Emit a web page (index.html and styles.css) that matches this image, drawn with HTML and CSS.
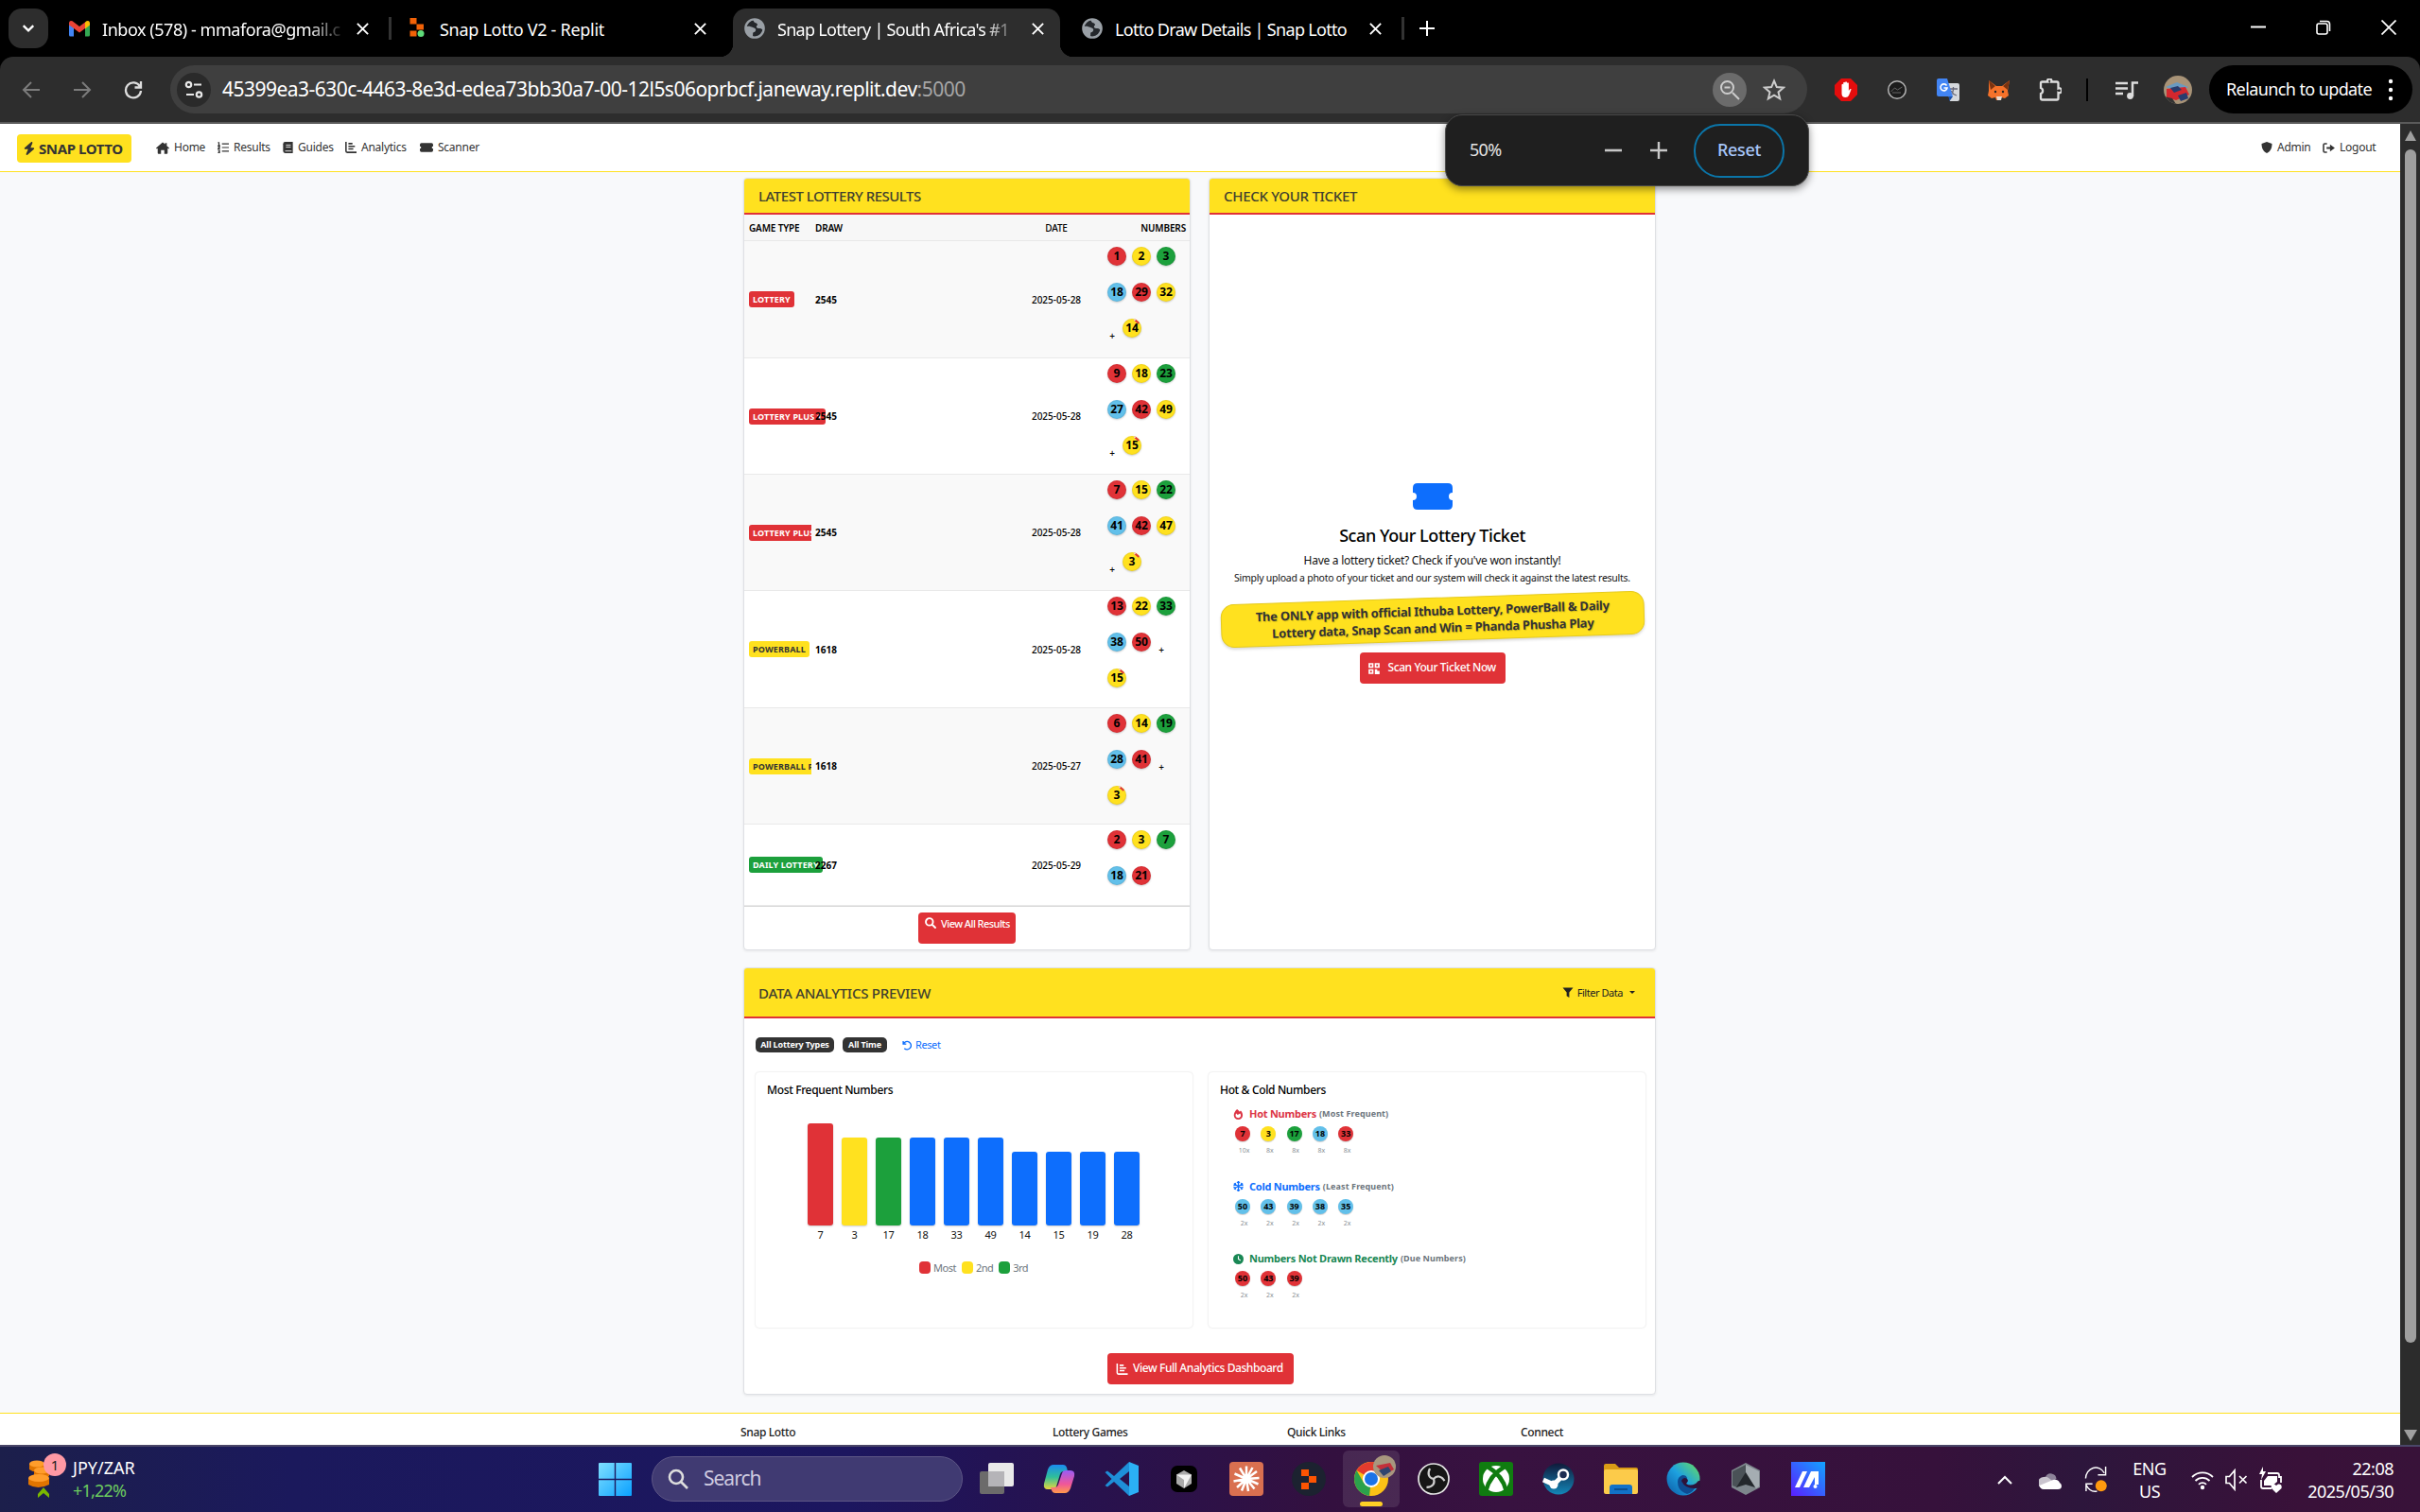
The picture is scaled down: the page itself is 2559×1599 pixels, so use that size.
FILE: index.html
```html
<!DOCTYPE html>
<html lang="en">
<head>
<meta charset="utf-8">
<title>Snap Lottery</title>
<link rel="stylesheet" href="styles.css">
</head>
<body>
<svg class="defs" aria-hidden="true">
  <symbol id="x" viewBox="0 0 16 16"><path d="M2 2l12 12M14 2L2 14" fill="none" stroke="currentColor" stroke-width="2"/></symbol>
  <symbol id="globe" viewBox="0 0 24 24"><circle cx="12" cy="12" r="10.500" fill="#24272b" stroke="#9aa0a6" stroke-width="2.600"/><path d="M2 10c4-1 5 0 8 1s4 2 3 4-3 1-3 3 0 3-1 4C4 21 1 15 2 10zM12 1c6 0 10 4 11 10v3c-2 0-3-2-5-2s-4 0-4-2 2-1 1-3-3-1-4-3 0-2 1-3z" fill="#9aa0a6"/></symbol>
  <symbol id="bolt" viewBox="0 0 448 512"><path fill="currentColor" d="M349 44c6-14 1-30-11-39s-30-8-41 2L41 231c-10 9-14 23-9 36s17 20 30 20H176L99 468c-6 14-1 30 11 39s30 8 41-2l256-219c10-9 14-23 9-36s-17-20-30-20H272z"/></symbol>
  <symbol id="home" viewBox="0 0 16 14"><path fill="currentColor" d="M8 0L0 7l1 1 1-.7V13q0 1 1 1h3V9.500h4V14h3q1 0 1-1V7.300l1 .7 1-1-3-2.700V1h-2v1.500z"/></symbol>
  <symbol id="list" viewBox="0 0 14 14"><path fill="none" stroke="currentColor" stroke-width="1.300" d="M5.500 2.500H14M5.500 7H14M5.500 11.500H14M.5 1h1.300v3.500M.3 4.500h3M.5 6h2v1.200l-2 1.500h2.500M.5 10.500h2v3h-2M1 12h1.500"/></symbol>
  <symbol id="book" viewBox="0 0 12 14"><path fill="currentColor" d="M2.500 0H12v14H2.500Q0 14 0 11.500v-9Q0 0 2.500 0z"/><path stroke="#fff" d="M3.500 4h6M3.500 6.500h6M2.500 11.300h8"/></symbol>
  <symbol id="chart" viewBox="0 0 14 14"><path fill="none" stroke="currentColor" stroke-width="1.800" d="M1 0v11.500Q1 13 2.500 13H14M4 2.200h5M4 5.500h8M4 8.800h6"/></symbol>
  <symbol id="ticket" viewBox="0 0 42 28"><path fill="currentColor" d="M5 0h32q5 0 5 5v5a4 4 0 0 0 0 8v5q0 5-5 5H5q-5 0-5-5v-5a4 4 0 0 0 0-8V5q0-5 5-5z"/></symbol>
  <symbol id="shield" viewBox="0 0 12 12"><path fill="currentColor" d="M6 0l5.500 2c0 5-2 8.500-5.500 10C2.500 10.500.5 7 .5 2z"/></symbol>
  <symbol id="logout" viewBox="0 0 14 12"><path fill="none" stroke="currentColor" stroke-width="1.700" d="M5 1H2.500Q1 1 1 2.500v7Q1 11 2.500 11H5"/><path fill="currentColor" d="M4.500 4.800H8.500V2L14 6l-5.500 4V7.200h-4z"/></symbol>
  <symbol id="search" viewBox="0 0 14 14"><path fill="none" stroke="currentColor" stroke-width="2.200" stroke-linecap="round" d="M9 9l3.800 3.800M10 5.700a4.400 4.400 0 1 1-8.800 0 4.400 4.400 0 0 1 8.800 0z"/></symbol>
  <symbol id="qr" viewBox="0 0 12 12"><path fill="none" stroke="currentColor" stroke-width="1.700" d="M1 1h3.500v3.500H1zM7.500 1H11v3.500H7.500zM1 7.500h3.500V11H1z"/><path fill="currentColor" d="M6.800 6.800h2.500v1.700h2.500V12H6.800z"/></symbol>
  <symbol id="filter" viewBox="0 0 12 12"><path fill="currentColor" d="M0 .5h12L7.500 6v6l-3-2V6z"/></symbol>
  <symbol id="undo" viewBox="0 0 12 12"><path fill="none" stroke="currentColor" stroke-width="1.500" d="M1.200 1v3.500h3.500M1.500 4.200A4.600 4.600 0 1 1 2.500 9.500"/></symbol>
  <symbol id="fire" viewBox="0 0 12 12"><path fill="currentColor" fill-rule="evenodd" d="M4.500 0C2 2.300.8 4.500.8 7A5.100 5 0 0 0 11 7c0-1.800-.9-3.800-2.300-5.300L7.500 3C6.700 2 5.600.9 4.500 0zM3.500 5l1.700 1.500L8 5c1.500 2 1 5-2 5S2 7.500 3.500 5z"/></symbol>
  <symbol id="snow" viewBox="0 0 12 12"><path fill="none" stroke="currentColor" stroke-width="1.300" d="M6 0v12M.8 3l10.400 6M11.200 3L.8 9M4.300 1L6 2.500 7.700 1M4.300 11L6 9.500 7.700 11M.5 5l2.300-.8L2.300 2M11.500 7l-2.300.8.5 2.200M11.500 5l-2.300-.8.5-2.200M.5 7l2.300.8-.5 2.200"/></symbol>
  <symbol id="clock" viewBox="0 0 12 12"><circle cx="6" cy="6" r="6" fill="currentColor"/><path fill="none" stroke="#fff" stroke-width="1.200" d="M6 2.500V6l2.500 1.700"/></symbol>
</svg>

<header class="tabstrip">
  <div class="tab-menu"><svg viewBox="0 0 12 12" width="14" height="14"><path d="M1.500 3.500L6 8l4.500-4.500" fill="none" stroke="#fff" stroke-width="2"/></svg></div>
  <div class="tab sep">
    <svg class="fav" viewBox="0 0 22 17"><path d="M0 2v13.500Q0 17 1.500 17H5V7z" fill="#4285f4"/><path d="M22 2v13.500q0 1.500-1.500 1.500H17V7z" fill="#34a853"/><path d="M17 2l1.500-1.200Q22-.5 22 3v2l-5 4z" fill="#fbbc04"/><path d="M0 5V3Q0-.5 3.500.8L11 6.500 17 2v6.500L11 13 5 8.500z" fill="#ea4335"/></svg>
    <span class="tab-title fade k1">Inbox (578) - mmafora@gmail.c</span><svg class="close"><use href="#x"/></svg>
  </div>
  <div class="tab">
    <svg class="fav" viewBox="0 0 22 22"><path d="M3.500 0h7v6.500h-7zM10.500 6.500H18v6h-7.500zM3.500 13.500h7v6h-7z" fill="#f26207"/><circle cx="15" cy="16.500" r="3.500" fill="#5fdc7a"/></svg>
    <span class="tab-title k2">Snap Lotto V2 - Replit</span><svg class="close"><use href="#x"/></svg>
  </div>
  <div class="tab active">
    <svg class="fav"><use href="#globe"/></svg>
    <span class="tab-title fade k3">Snap Lottery | South Africa's #1</span><svg class="close"><use href="#x"/></svg>
  </div>
  <div class="tab sep">
    <svg class="fav"><use href="#globe"/></svg>
    <span class="tab-title k4">Lotto Draw Details | Snap Lotto</span><svg class="close"><use href="#x"/></svg>
  </div>
  <svg class="newtab" viewBox="0 0 16 16"><path d="M8 0v16M0 8h16" stroke="#fff" stroke-width="2"/></svg>
  <div class="winctl">
    <svg viewBox="0 0 16 16"><path d="M0 7.500h16" stroke="#fff" stroke-width="2"/></svg>
    <svg viewBox="0 0 16 16"><rect x="1" y="4" width="11" height="11" rx="2" fill="none" stroke="#fff" stroke-width="1.600"/><path d="M4 1.500h7.500q3 0 3 3V12" fill="none" stroke="#fff" stroke-width="1.600"/></svg>
    <svg viewBox="0 0 16 16"><path d="M.5.5l15 15M15.500.5l-15 15" stroke="#fff" stroke-width="1.700"/></svg>
  </div>
</header>

<div class="toolbar">
  <svg class="nav-ic dim" viewBox="0 0 20 20"><path d="M19 10H2M10 2l-8 8 8 8" fill="none" stroke="currentColor" stroke-width="2"/></svg>
  <svg class="nav-ic dim" viewBox="0 0 20 20"><path d="M1 10h17M10 2l8 8-8 8" fill="none" stroke="currentColor" stroke-width="2"/></svg>
  <svg class="nav-ic" viewBox="0 0 20 20"><path d="M17 6.500A8 8 0 1 0 18 11M18 1v6.500h-6.500" fill="none" stroke="currentColor" stroke-width="2.300"/></svg>
  <div class="omnibox">
    <div class="circle site"><svg viewBox="0 0 20 20" width="20" height="20"><g fill="none" stroke="#e8e8e8" stroke-width="2.200"><circle cx="4.500" cy="4.500" r="2.700"/><path d="M10 4.500h8M2 15h8"/><circle cx="15.500" cy="15" r="2.700"/></g></svg></div>
    <span class="url">45399ea3-630c-4463-8e3d-edea73bb30a7-00-12l5s06oprbcf.janeway.replit.dev<i>:5000</i></span>
    <div class="circle zoomed"><svg viewBox="0 0 22 22" width="22" height="22"><path d="M14 14l7 7M15 8.500a6.500 6.500 0 1 1-13 0 6.500 6.500 0 0 1 13 0zM5.500 8.500h6" fill="none" stroke="#ccc" stroke-width="2"/></svg></div>
    <svg class="star" viewBox="0 0 24 24"><path d="M12 2.500l2.800 6.600 7.200.6-5.500 4.700 1.700 7L12 17.700l-6.200 3.700 1.700-7L2 9.700l7.200-.6z" fill="none" stroke="#ccc" stroke-width="2"/></svg>
  </div>
  <div class="exts">
    <svg viewBox="0 0 24 24"><path d="M7 0h10l7 7v10l-7 7H7l-7-7V7z" fill="#e40d0d"/><path d="M7.500 13V6.500q1-1.500 1.700 0V10V4.500q1-1.500 1.900 0V10 4q1-1.500 1.900 0v6V5q1-1.500 1.900 0v8l1.500-2q1.500-.5 1 1L15 18q-1 2-3.500 2-4 0-4-4z" fill="#fff"/></svg>
    <svg viewBox="0 0 24 24"><circle cx="12" cy="12" r="9.300" fill="#1c1c1c" stroke="#b5b5b5" stroke-width="1.500"/><path d="M5.500 14l4-4 3 2 5-3M7 15h9" stroke="#666" fill="none"/></svg>
    <svg viewBox="0 0 24 24"><path d="M9 5h13q2 0 2 2v15q0 2-2 2h-8z" fill="#d5d8dc"/><path d="M13 11h9M17.500 9v2c0 4-2 6-4 7M15 13c1 2 3 4 6 5" stroke="#667" fill="none" stroke-width="1.300"/><path d="M2 0h9l6 19H2q-2 0-2-2V2q0-2 2-2z" fill="#4285f4"/><path d="M12.500 19H17l-3.500 5z" fill="#1a4fa8"/><path d="M10.500 7.500A3.500 3.500 0 1 0 11 10H7.500" stroke="#fff" stroke-width="1.600" fill="none"/></svg>
    <svg viewBox="0 0 24 24"><path d="M1 2l8 6h6l8-6-2 11 1 5-4 3-4-1-1 3h-4l-1-3-4 1-4-3 1-5z" fill="#f5722a"/><path d="M1 2l7 6-5 4zM23 2l-7 6 5 4z" fill="#7a3310"/><path d="M9 19h6l-1 4h-4z" fill="#e8dcd2"/><circle cx="8" cy="14" r="1.200" fill="#222"/><circle cx="16" cy="14" r="1.200" fill="#222"/></svg>
    <svg viewBox="0 0 24 24"><path d="M2 5q0-1.500 1.500-1.500h5.700a2.200 2.200 0 1 1 4 0H19q1.500 0 1.500 1.500v5.500a2.500 2.500 0 1 1 0 4.500v6q0 1.500-1.500 1.500H3.500Q2 22.500 2 21v-5a3.200 3.200 0 0 0 0-6z" fill="none" stroke="#ddd" stroke-width="2.300"/></svg>
  </div>
  <span class="tb-sep"></span>
  <svg class="music" viewBox="0 0 24 20"><path d="M0 3h13M0 8.500h13M0 14h8M18 17V2.500h6" fill="none" stroke="#ddd" stroke-width="2.500"/><circle cx="15.500" cy="16.500" r="3.400" fill="#ddd"/></svg>
  <svg class="avatar" viewBox="0 0 30 30"><clipPath id="av"><circle cx="15" cy="15" r="15"/></clipPath><g clip-path="url(#av)"><path fill="#a89377" d="M0 0h30v30H0z"/><path fill="#6a9ac0" d="M2 12l12-5 12 5-8 5z"/><path fill="#d4272e" d="M3 14l20-2 4 8-14 6-10-3z"/><path fill="#283c6e" d="M7 13l8-2 4 4-8 3zM15 21l9-3 2 6-8 3z"/><path fill="#333" d="M0 22l9 2 4 6H0z"/></g></svg>
  <div class="relaunch"><span>Relaunch to update</span><svg viewBox="0 0 6 24" width="6" height="24"><circle cx="3" cy="3" r="2.200" fill="#fff"/><circle cx="3" cy="12" r="2.200" fill="#fff"/><circle cx="3" cy="21" r="2.200" fill="#fff"/></svg></div>
</div>

<div class="zoom-pop"><span class="pct">50%</span>
  <svg viewBox="0 0 18 18"><path d="M0 9h18" stroke="#c7c7c7" stroke-width="2.600"/></svg>
  <svg viewBox="0 0 18 18"><path d="M0 9h18M9 0v18" stroke="#c7c7c7" stroke-width="2.400"/></svg>
  <span class="zreset">Reset</span></div>

<div class="viewport">
<div class="page">
  <nav class="nav">
    <div class="brand"><svg width="12" height="14"><use href="#bolt"/></svg><span>SNAP LOTTO</span></div>
    <a class="n1"><svg width="14" height="13"><use href="#home"/></svg><span>Home</span></a>
    <a class="n2"><svg width="12" height="12"><use href="#list"/></svg><span>Results</span></a>
    <a class="n3"><svg width="11" height="12"><use href="#book"/></svg><span>Guides</span></a>
    <a class="n4"><svg width="12" height="12"><use href="#chart"/></svg><span>Analytics</span></a>
    <a class="n5"><svg width="14" height="10"><use href="#ticket"/></svg><span>Scanner</span></a>
    <a class="n6"><svg width="12" height="12"><use href="#shield"/></svg><span>Admin</span></a>
    <a class="n7"><svg width="13" height="11"><use href="#logout"/></svg><span>Logout</span></a>
  </nav>

  <main class="main">
    <div class="top">
      <section class="card results">
        <h2>LATEST LOTTERY RESULTS</h2>
        <div class="tr th"><span>GAME TYPE</span><span>DRAW</span><span class="date">DATE</span><span class="right">NUMBERS</span></div>
        <div class="tr odd r1"><div class="type"><b class="badge red">LOTTERY</b></div><b class="draw">2545</b><span class="date">2025-05-28</span><div class="nums"><b class="r">1</b><b class="y">2</b><b class="g">3</b><b class="b">18</b><b class="r">29</b><b class="y">32</b><i>+</i><b class="y bonus">14</b></div></div>
        <div class="tr"><div class="type"><b class="badge red">LOTTERY PLUS 1</b></div><b class="draw">2545</b><span class="date">2025-05-28</span><div class="nums"><b class="r">9</b><b class="y">18</b><b class="g">23</b><b class="b">27</b><b class="r">42</b><b class="y">49</b><i>+</i><b class="y bonus">15</b></div></div>
        <div class="tr odd"><div class="type clip"><b class="badge red">LOTTERY PLUS 2</b></div><b class="draw">2545</b><span class="date">2025-05-28</span><div class="nums"><b class="r">7</b><b class="y">15</b><b class="g">22</b><b class="b">41</b><b class="r">42</b><b class="y">47</b><i>+</i><b class="y bonus">3</b></div></div>
        <div class="tr r1"><div class="type"><b class="badge yellow">POWERBALL</b></div><b class="draw">1618</b><span class="date">2025-05-28</span><div class="nums"><b class="r">13</b><b class="y">22</b><b class="g">33</b><b class="b">38</b><b class="r">50</b><i>+</i><b class="y bonus">15</b></div></div>
        <div class="tr odd"><div class="type clip"><b class="badge yellow">POWERBALL PLUS</b></div><b class="draw">1618</b><span class="date">2025-05-27</span><div class="nums"><b class="r">6</b><b class="y">14</b><b class="g">19</b><b class="b">28</b><b class="r">41</b><i>+</i><b class="y bonus">3</b></div></div>
        <div class="tr last"><div class="type"><b class="badge green">DAILY LOTTERY</b></div><b class="draw">2267</b><span class="date">2025-05-29</span><div class="nums"><b class="r">2</b><b class="y">3</b><b class="g">7</b><b class="b">18</b><b class="r">21</b></div></div>
        <div class="card-foot"><a class="btn all"><svg width="12" height="12"><use href="#search"/></svg><span>View All Results</span></a></div>
      </section>

      <section class="card scan">
        <h2>CHECK YOUR TICKET</h2>
        <div class="scan-body">
          <svg class="bigticket"><use href="#ticket"/></svg>
          <h3>Scan Your Lottery Ticket</h3>
          <p class="p1">Have a lottery ticket? Check if you've won instantly!</p>
          <p class="p2">Simply upload a photo of your ticket and our system will check it against the latest results.</p>
          <div class="ribbon"><span>The ONLY app with official Ithuba Lottery, PowerBall &amp; Daily</span><span>Lottery data, Snap Scan and Win = Phanda Phusha Play</span></div>
          <a class="btn now"><svg width="12" height="12"><use href="#qr"/></svg><span>Scan Your Ticket Now</span></a>
        </div>
      </section>
    </div>

    <section class="card analytics">
      <h2><span>DATA ANALYTICS PREVIEW</span><span class="filter"><svg width="12" height="11"><use href="#filter"/></svg><em>Filter Data</em><i class="caret"></i></span></h2>
      <div class="chips"><b>All Lottery Types</b><b>All Time</b><a><svg width="11" height="11"><use href="#undo"/></svg><span>Reset</span></a></div>
      <div class="panels">
        <div class="panel freq">
          <h4>Most Frequent Numbers</h4>
          <div class="bars">
            <div><i class="r" style="height:108px"></i><span>7</span></div><div><i class="y" style="height:93px"></i><span>3</span></div><div><i class="g" style="height:93px"></i><span>17</span></div><div><i style="height:93px"></i><span>18</span></div><div><i style="height:93px"></i><span>33</span></div><div><i style="height:93px"></i><span>49</span></div><div><i style="height:78px"></i><span>14</span></div><div><i style="height:78px"></i><span>15</span></div><div><i style="height:78px"></i><span>19</span></div><div><i style="height:78px"></i><span>28</span></div>
          </div>
          <div class="legend"><i class="r"></i><span>Most</span><i class="y"></i><span>2nd</span><i class="g"></i><span>3rd</span></div>
        </div>
        <div class="panel hot">
          <h4>Hot &amp; Cold Numbers</h4>
          <div class="grp"><h5 class="c-hot"><svg width="11" height="11"><use href="#fire"/></svg><span>Hot Numbers</span><small>(Most Frequent)</small></h5>
            <div class="minis"><div><b class="r">7</b><span>10x</span></div><div><b class="y">3</b><span>8x</span></div><div><b class="g">17</b><span>8x</span></div><div><b class="b">18</b><span>8x</span></div><div><b class="r">33</b><span>8x</span></div></div></div>
          <div class="grp"><h5 class="c-cold"><svg width="11" height="11"><use href="#snow"/></svg><span>Cold Numbers</span><small>(Least Frequent)</small></h5>
            <div class="minis"><div><b class="b">50</b><span>2x</span></div><div><b class="b">43</b><span>2x</span></div><div><b class="b">39</b><span>2x</span></div><div><b class="b">38</b><span>2x</span></div><div><b class="b">35</b><span>2x</span></div></div></div>
          <div class="grp"><h5 class="c-due"><svg width="11" height="11"><use href="#clock"/></svg><span>Numbers Not Drawn Recently</span><small>(Due Numbers)</small></h5>
            <div class="minis"><div><b class="r">50</b><span>2x</span></div><div><b class="r">43</b><span>2x</span></div><div><b class="r">39</b><span>2x</span></div></div></div>
        </div>
      </div>
      <a class="btn dash"><svg width="13" height="12"><use href="#chart"/></svg><span>View Full Analytics Dashboard</span></a>
    </section>
  </main>

  <footer class="footer"><span>Snap Lotto</span><span>Lottery Games</span><span>Quick Links</span><span>Connect</span></footer>
</div>
<div class="scrollbar"><i class="up"></i><i class="thumb"></i><i class="down"></i></div>
</div>

<div class="taskbar">
  <div class="widget">
    <svg viewBox="0 0 34 52" width="34" height="52"><g fill="#e07400"><path d="M1 14v6q7 5 16 0v-6zM6 21v6q7 5 16 0v-6zM0 29v7q10 6 22 0v-7z"/></g><g fill="#ff9d2b"><ellipse cx="9" cy="14" rx="8" ry="3.500"/><ellipse cx="14" cy="21" rx="8" ry="3.500"/><ellipse cx="11" cy="29" rx="11" ry="4"/></g><path d="M10 50l0-4 6-7 6 7v4l-6-5z" fill="#7ab800"/></svg>
    <b class="notif">1</b>
    <div class="w-text"><span>JPY/ZAR</span><em>+1,22%</em></div>
  </div>
  <svg class="win" viewBox="0 0 35 35"><linearGradient id="wg" x1="0" y1="0" x2="1" y2="1"><stop offset="0" stop-color="#7fe0ff"/><stop offset="1" stop-color="#0aa0ff"/></linearGradient><path fill="url(#wg)" d="M0 1q0-1 1-1h15.800v16.800H0zM18.200 0H34q1 0 1 1v15.800H18.200zM0 18.200h16.800V35H1q-1 0-1-1zM18.200 18.200H35V34q0 1-1 1H18.200z"/></svg>
  <div class="search"><svg viewBox="0 0 22 22" width="22" height="22"><path d="M14 14l7 7M16 9A7 7 0 1 1 2 9a7 7 0 0 1 14 0z" fill="none" stroke="#ddd" stroke-width="2.600"/></svg><span>Search</span></div>
  <div class="apps">
    <svg viewBox="0 0 36 36"><rect x="0" y="10" width="26" height="24" rx="2" fill="#6c6b6b"/><rect x="9" y="1" width="27" height="25" rx="2" fill="#e9e9e9"/><path d="M9 10h17v16H9z" fill="#b5b4b8"/></svg>
    <svg viewBox="0 0 36 36"><linearGradient id="c1" x1="0" y1="0" x2="0" y2="1"><stop offset="0" stop-color="#1a8cf0"/><stop offset=".5" stop-color="#2fbf9a"/><stop offset="1" stop-color="#e9d63c"/></linearGradient><linearGradient id="c2" x1="0" y1="0" x2="0" y2="1"><stop offset="0" stop-color="#9a5cf5"/><stop offset=".6" stop-color="#f0569a"/><stop offset="1" stop-color="#ff9a4a"/></linearGradient><path d="M12 3h10q3 0 4 3l1 4h-4q-3 0-4 3l-4 13q-1 3-4 3H6q-5 0-4-6L6 8q2-5 6-5z" fill="url(#c1)"/><path d="M24 33H14q-3 0-4-3l-1-3h4q3 0 4-3l4-12q1-3 4-3h5q5 0 4 6l-4 13q-2 5-6 5z" fill="url(#c2)"/></svg>
    <svg viewBox="0 0 36 36"><path d="M26 0L10 15 3 9.500.5 11l7 7-7 7L3 26.500 10 21l16 15V26l-10-8 10-8z" fill="#1e8fd8"/><path d="M26 0l10 4v28l-10 4z" fill="#2bb0f5"/></svg>
    <svg viewBox="0 0 36 36"><rect x="4" y="4" width="28" height="28" rx="7" fill="#000"/><path d="M18 9l8 4.500v9.500l-8 5-8-5v-9.500z" fill="#aaa"/><path d="M10 13.500h16L18 28v-9z" fill="#f2f2f2"/></svg>
    <svg viewBox="0 0 36 36"><rect width="36" height="36" rx="4" fill="#d97050"/><path d="M18 18V4.500M18 18l6.500-12M18 18l11-8M18 18l13.500-1M18 18l12.500 5.500M18 18l8.500 10.500M18 18l2 13M18 18l-5 12.500M18 18L8 27M18 18L4.500 20.500M18 18L5.500 12.500M18 18L11 6.500" stroke="#fff" stroke-width="2.500"/></svg>
    <svg viewBox="0 0 36 36"><circle cx="18" cy="18" r="18" fill="#1c2230"/><path d="M10 8h8v7h8v7h-8v7h-8v-7h8v-7h-8z" fill="#fd5402"/></svg>
    <div class="app-on"><svg viewBox="0 0 36 36"><circle cx="18" cy="18" r="18" fill="#fbc116"/><path d="M18 18L2.500 9A18 18 0 0 1 33.600 9z" fill="#e33b2e"/><path d="M18 18l-2 18A18 18 0 0 1 2.500 9L10 22l8 4z" fill="#2ba24c"/><circle cx="18" cy="18" r="9" fill="#fff"/><circle cx="18" cy="18" r="7" fill="#1a73e8"/></svg><svg class="mini-av" viewBox="0 0 24 24"><circle cx="12" cy="12" r="12" fill="#a8977e"/><path fill="#c3303a" d="M3 11l15-3 4 7-9 5z"/><path fill="#30456f" d="M6 16l10-4 3 5-8 5z"/></svg></div>
    <svg viewBox="0 0 36 36"><circle cx="18" cy="18" r="16" fill="#161616" stroke="#e6e6e6" stroke-width="1.700"/><g fill="none" stroke="#cfcfcf" stroke-width="2.200"><path id="ob" d="M18 18c-5-1-7-5-4-11"/><use href="#ob" transform="rotate(120 18 18)"/><use href="#ob" transform="rotate(240 18 18)"/></g></svg>
    <svg viewBox="0 0 36 36"><rect width="36" height="36" rx="3" fill="#107c10"/><circle cx="18" cy="18" r="14" fill="#fff"/><path d="M9 5C19 11 26 20 28.500 30M27 5C17 11 10 20 7.500 30" fill="none" stroke="#107c10" stroke-width="4.500"/></svg>
    <svg viewBox="0 0 36 36"><linearGradient id="st" x1="0" y1="0" x2="0" y2="1"><stop offset="0" stop-color="#101a3a"/><stop offset="1" stop-color="#1387b8"/></linearGradient><circle cx="18" cy="18" r="16.500" fill="url(#st)"/><path d="M2 19l11 5 7-7" stroke="#fff" stroke-width="5" fill="none"/><circle cx="23" cy="13.500" r="5" fill="#1c2d52" stroke="#fff" stroke-width="2.500"/><circle cx="13" cy="24" r="4.500" fill="#fff"/></svg>
    <svg viewBox="0 0 36 36"><path d="M0 4q0-2 2-2h10l4 4h18q2 0 2 2v6H0z" fill="#d99b16"/><rect y="8" width="36" height="26" rx="2" fill="#fccb4a"/><path d="M6 34V27q0-3 3-3h18q3 0 3 3v7z" fill="#1272c8"/><path d="M11 29h14" stroke="#0b4f91" stroke-width="2"/></svg>
    <svg viewBox="0 0 36 36"><linearGradient id="ed" x1="0" y1="1" x2="1" y2="0"><stop offset="0" stop-color="#0c59a4"/><stop offset=".5" stop-color="#1da1e0"/><stop offset="1" stop-color="#6be05a"/></linearGradient><circle cx="18" cy="18" r="17.500" fill="url(#ed)"/><path d="M12 21q0-5 5-7 6 0 5 6-1 3-2 3 2 3 8 2 3-1 4 0-3 7-10 9-10-3-10-13z" fill="#0e4c92"/><path d="M16 20q1-3 4-3 3 1 3 3-1 2-2 3 4 3 10 0l3-3h2v7l-4 1q-12 1-16-8z" fill="#2e1239"/></svg>
    <svg viewBox="0 0 36 36"><path d="M18 1l15 8v18l-15 8-15-8V9z" fill="#7d868c"/><path d="M18 3v12L9 27l-5-2V10z" fill="#4a5257"/><path d="M18 3v10l11 15 3-2V10z" fill="#a5adb2"/><path d="M18 11l10 16-10-3-10 3z" fill="#23282c"/></svg>
    <svg viewBox="0 0 36 36"><linearGradient id="ma" x1="0" y1="1" x2="1" y2="0"><stop offset="0" stop-color="#5a1eff"/><stop offset="1" stop-color="#12a4ff"/></linearGradient><path fill="url(#ma)" d="M0 0h36v36H0z"/><path d="M4 27L12 10h5L9 27zM13 27l8-17h8v14h-4V16l-6 11z" fill="#fff"/><circle cx="25.500" cy="26" r="2" fill="#fff"/></svg>
  </div>
  <div class="tray">
    <svg class="t1" viewBox="0 0 16 10"><path d="M1 9l7-7 7 7" fill="none" stroke="#fff" stroke-width="2"/></svg>
    <svg class="t2" viewBox="0 0 24 20"><path d="M7 7a6 6 0 0 1 11.500 2L10 13z" fill="#8d8399"/><path d="M5 19a6 6 0 0 1 0-12 6 6 0 0 1 6 1.500l10 8z" fill="#c9c4ce"/><path d="M5 20q-3.500 0-4.500-4L15 10q5-1 7 3 2 1 2 3.500 0 3.500-4 3.500z" fill="#fff"/></svg>
    <svg class="t3" viewBox="0 0 26 30"><path d="M1.500 14A11 12 0 0 1 22 8M23.500 1v9h-8.500M2 28v-8h7M2 21c3 6 7 8 12 7" fill="none" stroke="#fff" stroke-width="1.500"/><circle cx="18.500" cy="22" r="6.200" fill="#ff9a0e"/></svg>
    <div class="lang"><span>ENG</span><span>US</span></div>
    <svg class="t4" viewBox="0 0 24 22"><g fill="none" stroke="#fff" stroke-width="1.800"><path d="M1 8a15.500 15.500 0 0 1 22 0M4.500 12a10.500 10.500 0 0 1 15 0M8 15.800a5.700 5.700 0 0 1 8 0"/></g><circle cx="12" cy="19" r="2.200" fill="#fff"/></svg>
    <svg class="t5" viewBox="0 0 24 24"><path d="M1 8.500h3.500L10 2v20l-5.500-6.500H1zM15 8l7.500 7.500M22.500 8L15 15.500" fill="none" stroke="#fff" stroke-width="1.700"/></svg>
    <svg class="t6" viewBox="0 0 24 28"><path d="M9 7h10q2 0 2 2v2h2v6M13 23H4q-2 0-2-2v-7" fill="none" stroke="#fff" stroke-width="1.800"/><path d="M9 10h10v6l-5 4H5v-5z" fill="#fff"/><path d="M4 0L0 8h3l-1 6 5-9H4zM18 28l-5-5q-1.500-5 3-4.500l2 1.500 2-1.500q4.500-.5 3.500 4.500z" fill="#fff"/></svg>
    <div class="clock"><span>22:08</span><span>2025/05/30</span></div>
  </div>
</div>
</body>
</html>
```
FILE: styles.css
```css
*{box-sizing:border-box;margin:0;padding:0}
html,body{width:2559px;height:1599px;overflow:hidden}
body{font-family:"Noto Sans","Open Sans",sans-serif;background:#000;color:#212529;font-size:12px;line-height:1.2;display:flex;flex-direction:column;position:relative}
svg{display:block;flex:none}
i,em{font-style:normal}
span,b{white-space:nowrap}
.defs{position:absolute;width:0;height:0}
.r{background:#e03237}.y{background:#ffe11f}.g{background:#1ca03c}.b{background:#62c0ea}

/* browser chrome */
.tabstrip{height:60px;background:#000;display:flex;padding-left:9px;flex:none}
.tab-menu{width:42px;height:42px;margin:9px 7px 0 0;border-radius:14px;background:#2d2d2d;display:flex;align-items:center;justify-content:center}
.tab{width:357px;height:60px;display:flex;align-items:center;padding-left:15px;position:relative;color:#fff;font-size:18px}
.tab>*{position:relative}
.fav{width:22px;height:22px}
.tab-title{width:253px;margin:4px 0 0 13px}
.k1{letter-spacing:-.45px}.k2{letter-spacing:-.28px}.k3{letter-spacing:-.71px}.k4{letter-spacing:-.68px}
.fade{-webkit-mask-image:linear-gradient(90deg,#000 86%,transparent 102%)}
.close{width:15px;height:15px;margin-left:15px}
.sep::after{content:"";position:absolute;right:1px;top:18px;width:3px;height:24px;background:#333}
.active::before{content:"";position:absolute;left:3px;right:8px;top:9px;bottom:0;background:#2d2d2d;border-radius:14px 14px 0 0}
.active::after{content:"";position:absolute;left:-11px;right:-6px;bottom:0;height:14px;background:radial-gradient(circle at 0 0,transparent 14px,#2d2d2d 14.500px) 0 0/14px 14px no-repeat,radial-gradient(circle at 100% 0,transparent 14px,#2d2d2d 14.500px) 100% 0/14px 14px no-repeat}
.newtab{width:16px;height:16px;margin:22px 0 0 15px}
.winctl{margin-left:auto;display:flex;gap:53px;padding:21px 25px 0 0}
.winctl svg{width:16px;height:16px}
.toolbar{height:71px;flex:none;background:#2d2d2d;border-bottom:2px solid #5a5a5a;border-radius:14px 14px 0 0;display:flex;align-items:center;padding:0 8px 0 23px}
.nav-ic{width:20px;height:20px;margin-right:34px;color:#ddd}
.nav-ic.dim{color:#7c7c7c}
.omnibox{width:1731px;height:51px;border-radius:26px;background:#3f3f3f;margin-left:-5px;display:flex;align-items:center;padding-left:7px;flex:none}
.circle{width:36px;height:36px;border-radius:50%;display:flex;align-items:center;justify-content:center;flex:none}
.site{background:#2a2a2a}
.zoomed{background:#6b6b6b}
.url{color:#fff;font-size:21px;margin-left:12px;width:1576px;letter-spacing:-.52px}
.url i{color:#a6a6a6}
.star{width:24px;height:24px;margin-left:17px}
.exts{display:flex;gap:30px;margin-left:29px}
.exts svg{width:24px;height:24px}
.tb-sep{width:2px;height:24px;background:#000;margin-left:26px}
.music{width:24px;height:20px;margin-left:29px}
.avatar{width:30px;height:30px;margin-left:27px}
.relaunch{margin-left:18px;width:215px;height:51px;border-radius:26px;background:#000;color:#fff;font-size:18px;display:flex;align-items:center;padding-left:18px;letter-spacing:-.6px}
.relaunch span{width:171px}
.zoom-pop{position:absolute;left:1528px;top:121px;width:385px;height:76px;border-radius:18px;background:#1f1f1f;border:1px solid #4a4a4a;box-shadow:0 3px 8px rgba(0,0,0,.45);z-index:5;display:flex;align-items:center;padding-left:25px;color:#e3e3e3;font-size:18px}
.pct{width:143px;letter-spacing:-.7px}
.zoom-pop svg{width:18px;height:18px;margin-right:30px}
.zreset{width:96px;height:57px;margin-left:-2px;border:2px solid #0b75a8;border-radius:28px;color:#a8c7fa;font-weight:500;letter-spacing:-.3px;display:flex;align-items:center;justify-content:center}

/* page */
.viewport{height:1397px;flex:none;display:flex}
.page{width:2538px;background:#f8f9fb;display:flex;flex-direction:column}
.scrollbar{width:21px;background:#2c2c2c;display:flex;flex-direction:column;align-items:center}
.up{margin-top:7px;border:6px solid transparent;border-top:0;border-bottom:11px solid #9f9f9f}
.thumb{width:12px;height:1262px;margin-top:9px;border-radius:6px;background:#9f9f9f}
.down{margin-top:auto;margin-bottom:4px;border:7px solid transparent;border-bottom:0;border-top:12px solid #9f9f9f}
.nav{height:51px;flex:none;background:#fff;border-bottom:1px solid #ffe11f;display:flex;align-items:center;padding:1px 0 0 18px;color:#333;letter-spacing:-.25px}
.brand{width:121px;height:30px;background:#ffe11f;border-radius:4px;display:flex;align-items:center;gap:4px;padding-left:7px;font-size:15px;font-weight:700;margin-right:26px;letter-spacing:-.4px}
.nav a{display:flex;align-items:center;gap:5px}
.n1{width:65px}.n2{width:69px}.n3{width:66px}.n4{width:79px}.n6{margin-left:auto;width:65px}.n7{width:82px}
.main{width:965px;margin-left:786px;padding-top:6px;flex:none}
.top{display:flex;gap:19px}
.card{background:#fff;border:1px solid #dee0e4;border-radius:4px;box-shadow:0 1px 3px rgba(0,0,0,.08)}
.card h2{background:#ffe11f;color:#40402f;border-bottom:2px solid #e03237;height:38px;border-radius:3px 3px 0 0;font-size:15px;font-weight:500;letter-spacing:-.48px;padding-left:15px;display:flex;align-items:center}
.results,.scan{width:473px;height:817px}
.scan h2{letter-spacing:-.3px}
.tr{height:123px;display:grid;grid-template-columns:70px 226px 58px 22px 1fr;align-items:center;padding-left:5px;border-bottom:1px solid #e9e9e9;color:#000;font-size:10px}
.tr.r1{height:124px}
.tr.last{height:86px}
.odd{background:#f9f9f9}
.th{height:28px;background:#f7f7f7;font-weight:600;grid-template-columns:70px 226px 58px 1fr;letter-spacing:-.15px}
.right{text-align:right;padding-right:4px}
.date{text-align:center;font-weight:500}
.type{width:66px}
.clip{overflow:hidden}
.badge{display:inline-block;height:17px;line-height:17px;padding:0 4px;border-radius:3px;font-size:9px;letter-spacing:.15px;color:#fff}
.badge.red{background:#e03237}.badge.green{background:#1ca03c}.badge.yellow{background:#ffe11f;color:#333}
.draw{position:relative;font-size:10px}
.nums{grid-column:5;align-self:start;width:78px;margin:6px 0 0 3px;display:flex;flex-wrap:wrap;gap:18px 6px}
.nums b{width:20px;height:20px;line-height:20px;border-radius:50%;text-align:center;font-size:12px;box-shadow:inset 0 0 0 1px rgba(0,0,0,.06),0 1px 2px rgba(0,0,0,.2)}
.nums i{width:10px;height:20px;line-height:36px;text-align:center;font-weight:500}
.bonus{position:relative}
.bonus::after{content:"";position:absolute;right:2px;top:2px;width:5px;height:2px;background:#e03237;border-left:1px solid #fff;transform:rotate(40deg)}
.card-foot{border-top:1px solid #d8d8d8;display:flex;justify-content:center;padding-top:6px}
.btn{background:#e03237;color:#fff;border-radius:4px;height:33px;display:flex;align-items:center;gap:5px;font-weight:500;letter-spacing:-.42px}
.all{width:103px;align-items:flex-start;padding:5px 0 0 7px;font-size:11px;letter-spacing:-.55px}
.scan-body{display:flex;flex-direction:column;align-items:center;padding-top:284px;color:#111}
.bigticket{width:42px;height:28px;color:#0d6efd}
h3{font-size:18px;font-weight:500;color:#000;margin-top:16px;line-height:22px;letter-spacing:-.42px}
.p1{font-size:12px;margin-top:8px;line-height:16px;letter-spacing:-.27px}
.p2{font-size:10.5px;line-height:20px;letter-spacing:-.26px}
.ribbon{width:448px;height:46px;margin-top:11px;background:#ffe11f;border:1px solid #e6cb1c;border-radius:14px;transform:rotate(-1.900deg);box-shadow:0 2px 3px rgba(0,0,0,.15);display:flex;flex-direction:column;align-items:center;justify-content:center;font-size:13px;font-weight:700;line-height:18px;letter-spacing:-.25px;color:#333;text-shadow:1px 1px 1px rgba(0,0,0,.15)}
.now{width:154px;margin-top:12px;padding-left:9px;gap:9px}
.analytics{height:452px;margin-top:18px}
.card.analytics h2{height:53px;justify-content:space-between;padding-right:21px;letter-spacing:-.25px}
.filter{display:flex;align-items:center;font-size:11px;font-weight:400;letter-spacing:-.45px;color:#222}
.filter em{margin:0 7px 0 4px}
.caret{border:3px solid transparent;border-top-color:#222;border-bottom:0}
.chips{display:flex;align-items:center;padding:20px 0 0 12px}
.chips b{background:#333;color:#fff;font-size:9px;height:16px;line-height:16px;border-radius:5px;width:83px;text-align:center;margin-right:9px;letter-spacing:-.15px}
.chips b+b{width:47px;margin-right:16px}
.chips a{display:flex;gap:3px;color:#0d6efd;font-size:11px;align-items:center;letter-spacing:-.4px}
.panels{display:flex;gap:17px;margin:21px 0 0 12px}
.panel{width:462px;height:270px;border-radius:4px;box-shadow:0 0 2px rgba(0,0,0,.18);padding:11px 0 0 12px}
h4{font-size:12px;font-weight:500;color:#000;line-height:16px;letter-spacing:-.35px}
.bars{display:flex;gap:9px;height:136px;align-items:flex-end;margin:19px 0 0 43px}
.bars div{width:27px;text-align:center;font-size:11px;color:#111}
.bars i{display:block;border-radius:3px;background-color:#0d6efd;box-shadow:0 1px 2px rgba(0,0,0,.2)}
.bars .r{background:#e03237}.bars .y{background:#ffe11f}.bars .g{background:#1ca03c}
.bars span{display:block;height:20px;line-height:20px;letter-spacing:-.3px}
.legend{display:flex;align-items:center;font-size:11px;color:#6c757d;margin:18px 0 0 161px;letter-spacing:-.5px}
.legend i{width:12px;height:13px;border-radius:4px;margin-right:3px}
.legend span{margin-right:6px}
.grp{height:76.500px;padding-left:14px}
.hot h4{margin-bottom:9px}
h5{display:flex;align-items:center;font-size:11px;line-height:16px;height:16px;letter-spacing:-.25px}
h5 span{margin:0 3px 0 6px}
h5 small{font-size:9px;color:#6c757d;letter-spacing:.1px}
.c-hot{color:#dc3545}.c-cold{color:#0d6efd}.c-due{color:#198754}
.minis{display:flex;gap:11.300px;margin:5px 0 0 2px}
.minis div{width:16px;display:flex;flex-direction:column;align-items:center}
.minis b{width:16px;height:16px;line-height:16px;border-radius:50%;font-size:9px;color:#000;text-align:center;box-shadow:0 1px 1px rgba(0,0,0,.2)}
.minis span{font-size:7px;line-height:8px;color:#8a9096;margin:6px 0 0 3px}
.dash{width:197px;margin:27px 0 0 384px;padding-left:9px}
.footer{margin-top:19px;height:34px;border-top:1px solid #ffe11f;background:#fff;padding:12px 0 0 783px;display:grid;grid-template-columns:330px 248px 247px 1fr;color:#222;font-weight:500;line-height:16px;letter-spacing:-.35px;flex:none}

/* taskbar */
.taskbar{height:71px;flex:none;border-top:2px solid #4a4668;background:linear-gradient(90deg,#1c1f4b 0,#1b195c 12%,#1c165f 35%,#231354 41%,#33103f 55%,#381240 62%,#36113b 80%,#2d163c 86%,#391139 95%,#381239 100%);display:flex;position:relative;color:#fff;font-size:18px}
.widget{display:flex;width:633px;padding-left:30px;position:relative;flex:none}
.widget>svg{margin-top:4px}
.notif{position:absolute;left:46px;top:7px;width:24px;height:24px;border-radius:50%;background:#ff99a4;color:#222;font-size:15px;line-height:24px;text-align:center;font-weight:400}
.w-text{margin:10px 0 0 13px;line-height:24px;display:flex;flex-direction:column}
.w-text em{color:#6ccb5f;letter-spacing:-.8px}
.win{width:35px;height:35px;margin-top:17px}
.search{width:329px;height:48px;border-radius:24px;margin:10px 0 0 21px;background:#403a72;border:1px solid #5d5685;display:flex;align-items:center;gap:16px;padding-left:16px;font-size:21px;letter-spacing:-1px;color:#cfcbe0;flex:none}
.apps{display:flex;gap:30px;margin:16px 0 0 18px}
.apps svg{width:36px;height:36px}
.app-on{width:36px;position:relative}
.app-on::before{content:"";position:absolute;left:-12px;top:-12px;width:60px;height:60px;border-radius:6px;background:rgba(255,255,255,.1)}
.app-on::after{content:"";position:absolute;left:6px;top:42px;width:24px;height:5px;border-radius:3px;background:#ffcf26}
.app-on svg{position:relative}
.app-on .mini-av{position:absolute;left:20px;top:-7px;width:24px;height:24px}
.tray{display:flex;align-items:center;margin:0 28px 0 auto;letter-spacing:-.5px}
.t1{width:16px;height:10px;margin-right:28px}
.t2{width:24px;height:20px;margin-right:24px}
.t3{width:25px;height:29px}
.lang{width:88px;text-align:center;display:flex;flex-direction:column;line-height:24px}
.t4{width:24px;height:22px}
.t5{width:24px;height:24px;margin-left:12px}
.t6{width:24px;height:28px;margin-left:12px}
.clock{width:118px;text-align:right;display:flex;flex-direction:column;line-height:24px}
```
